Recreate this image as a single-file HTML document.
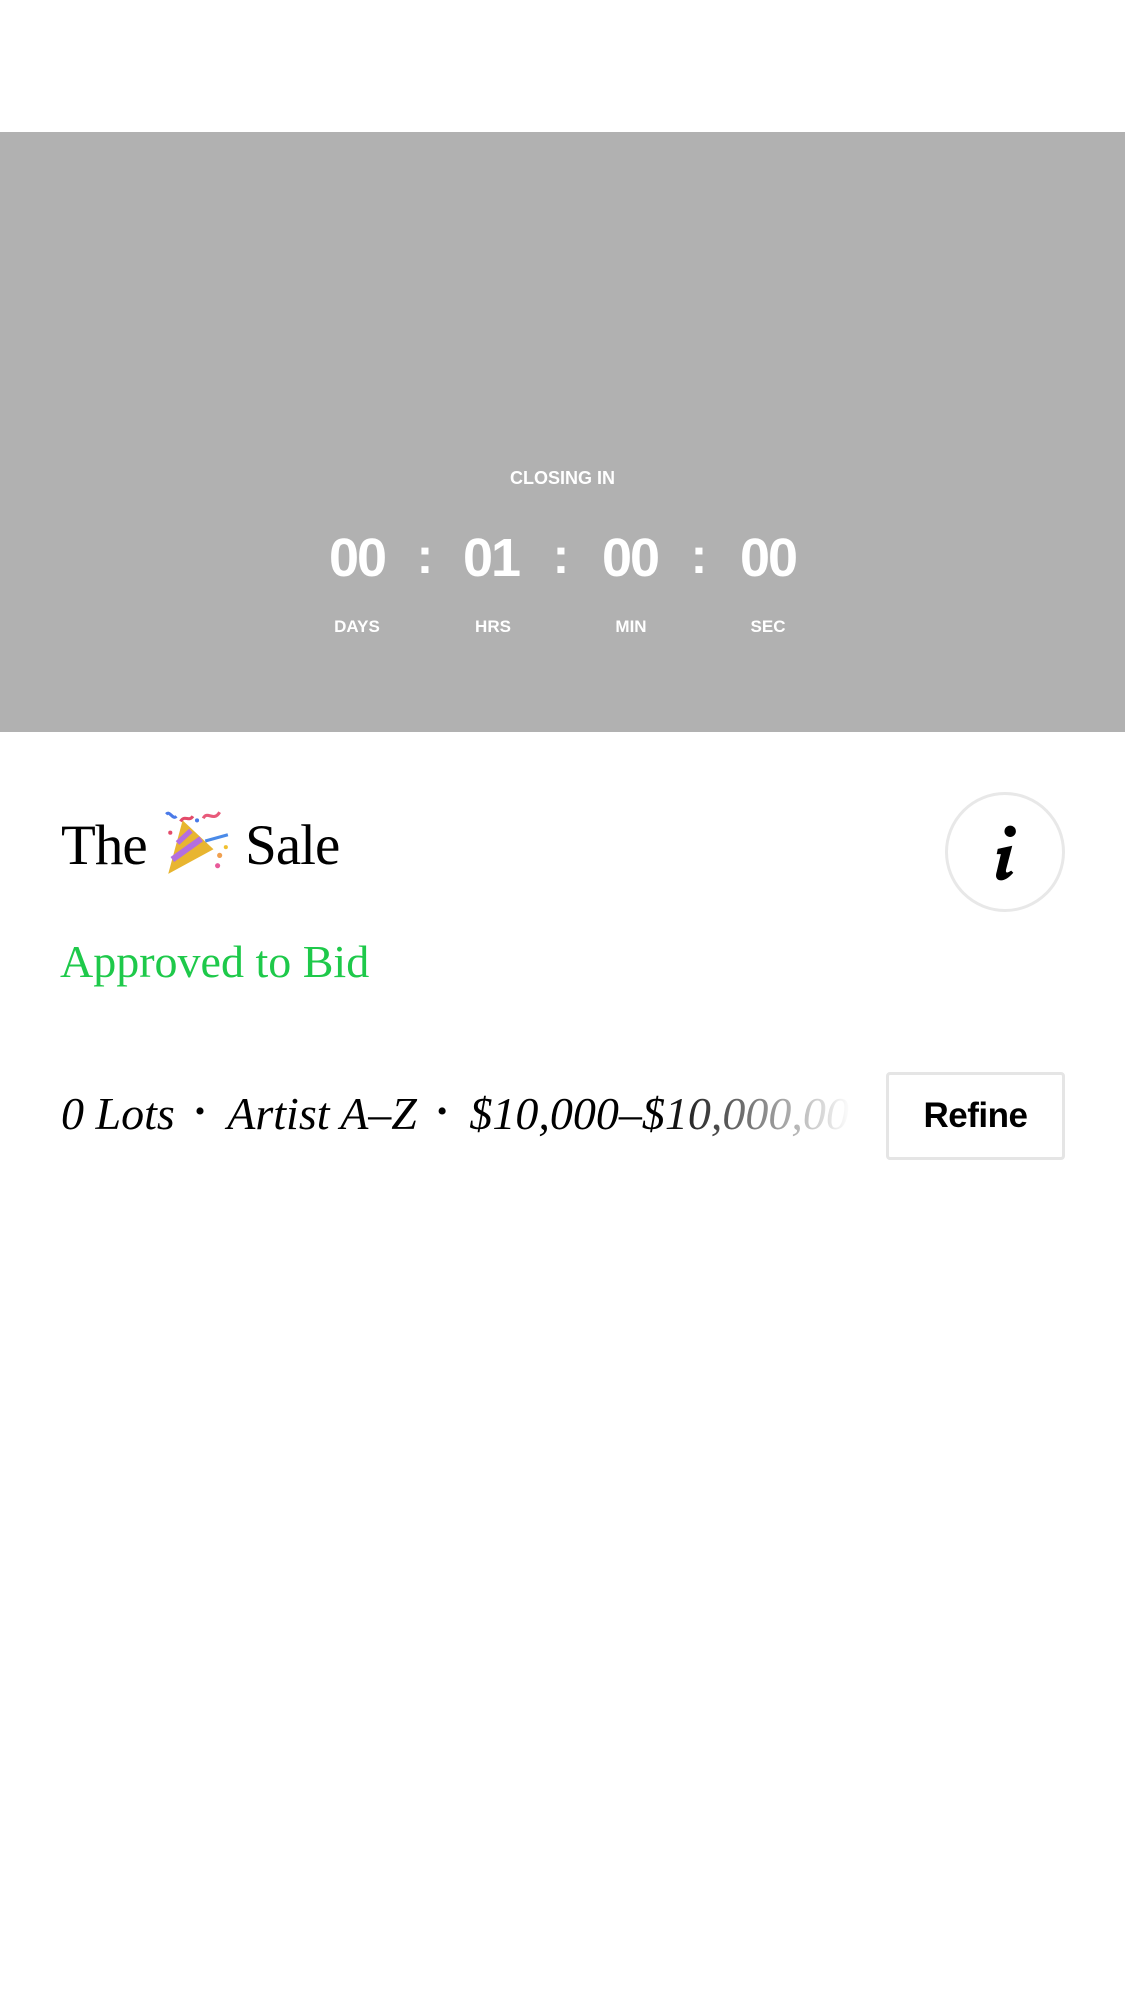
<!DOCTYPE html>
<html><head><meta charset="utf-8"><style>
html,body{margin:0;padding:0;background:#fff;}
body{width:1125px;height:2001px;position:relative;overflow:hidden;font-family:"Liberation Serif",serif;}
.hero{position:absolute;left:0;top:0;width:1125px;height:732px;color:#fff;font-family:"Liberation Sans",sans-serif;}
.ci{position:absolute;top:468px;left:0;width:1125px;text-align:center;font-size:18px;font-weight:bold;}
.d{position:absolute;top:527px;width:120px;margin-left:-60px;text-align:center;font-size:54px;line-height:62px;font-weight:bold;letter-spacing:-2px;}
.c{position:absolute;top:526px;width:30px;margin-left:-15px;text-align:center;font-size:50px;line-height:60px;font-weight:bold;}
.l{position:absolute;top:617px;width:100px;margin-left:-50px;text-align:center;font-size:17px;font-weight:bold;}
.title{position:absolute;left:61px;top:806px;font-size:57px;line-height:80px;color:#000;white-space:nowrap;letter-spacing:-1px;}
.info{position:absolute;left:945px;top:792px;width:120px;height:120px;border:3px solid #e8e8e8;border-radius:50%;box-sizing:border-box;}
.appr{position:absolute;left:60px;top:932px;font-size:46px;line-height:60px;color:#1ec94a;white-space:nowrap;}
.filt{position:absolute;left:61px;top:1082px;width:790px;overflow:hidden;font-style:italic;font-size:46px;line-height:60px;white-space:nowrap;color:#000;
-webkit-mask-image:linear-gradient(to right,#000 0,#000 600px,rgba(0,0,0,0) 790px);mask-image:linear-gradient(to right,#000 0,#000 600px,rgba(0,0,0,0) 790px);}
.dot{font-style:normal;font-size:30px;vertical-align:8px;margin:0 22px 0 20px;}
.ref{position:absolute;left:886px;top:1072px;width:179px;height:88px;border:3px solid #e5e5e5;border-radius:4px;box-sizing:border-box;font-family:"Liberation Sans",sans-serif;font-weight:bold;font-size:35px;line-height:82px;text-align:center;color:#000;letter-spacing:-0.5px;}
</style></head><body>
<div class="hero">
  <div style="position:absolute;left:0;top:132px;width:1125px;height:600px;background:#b1b1b1"></div>
  <div class="ci">CLOSING IN</div>
  <div class="d" style="left:357px">00</div>
  <div class="c" style="left:425px">:</div>
  <div class="d" style="left:491px">01</div>
  <div class="c" style="left:561px">:</div>
  <div class="d" style="left:630px">00</div>
  <div class="c" style="left:699px">:</div>
  <div class="d" style="left:768px">00</div>
  <div class="l" style="left:357px">DAYS</div>
  <div class="l" style="left:493px">HRS</div>
  <div class="l" style="left:631px">MIN</div>
  <div class="l" style="left:768px">SEC</div>
</div>
<div class="title">The <svg width="72" height="72" viewBox="0 0 70 70" style="vertical-align:-14px">
<path d="M8 66 L22 14 L52 42 Z" fill="#e8b530"/>
<path d="M12 52 L40 32" stroke="#b36ee0" stroke-width="6"/><path d="M17 36 L30 24" stroke="#b36ee0" stroke-width="5"/>
<path d="M20 15 C24 8 28 16 32 10" stroke="#e34b6a" stroke-width="3" fill="none"/>
<path d="M42 12 C46 4 52 16 58 6" stroke="#e85a7a" stroke-width="3" fill="none"/>
<path d="M6 8 C10 4 12 14 16 10" stroke="#4a7ae8" stroke-width="3" fill="none"/>
<path d="M44 34 L66 28" stroke="#4a8ae8" stroke-width="3"/>
<circle cx="36" cy="14" r="2" fill="#4a7ae8"/><circle cx="58" cy="48" r="2.5" fill="#f0a050"/><circle cx="56" cy="58" r="2.5" fill="#e85a9a"/><circle cx="10" cy="26" r="2" fill="#e34b6a"/><circle cx="64" cy="40" r="2" fill="#f0c030"/>
</svg> Sale</div>
<div class="info"><svg width="114" height="114" viewBox="0 0 110 110" style="position:absolute;left:0;top:0">
<circle cx="60" cy="35" r="5.5" fill="#000"/>
<path d="M48 52 L62 49 L56 72 Q55 77 61 73 L63 75 Q55 84 49 82 Q45 80 47 74 L51 57 L47 57 Z" fill="#000"/></svg></div>
<div class="appr">Approved to Bid</div>
<div class="filt">0 Lots<span class="dot">•</span>Artist A–Z<span class="dot">•</span>$10,000–$10,000,000</div>
<div class="ref">Refine</div>
</body></html>
